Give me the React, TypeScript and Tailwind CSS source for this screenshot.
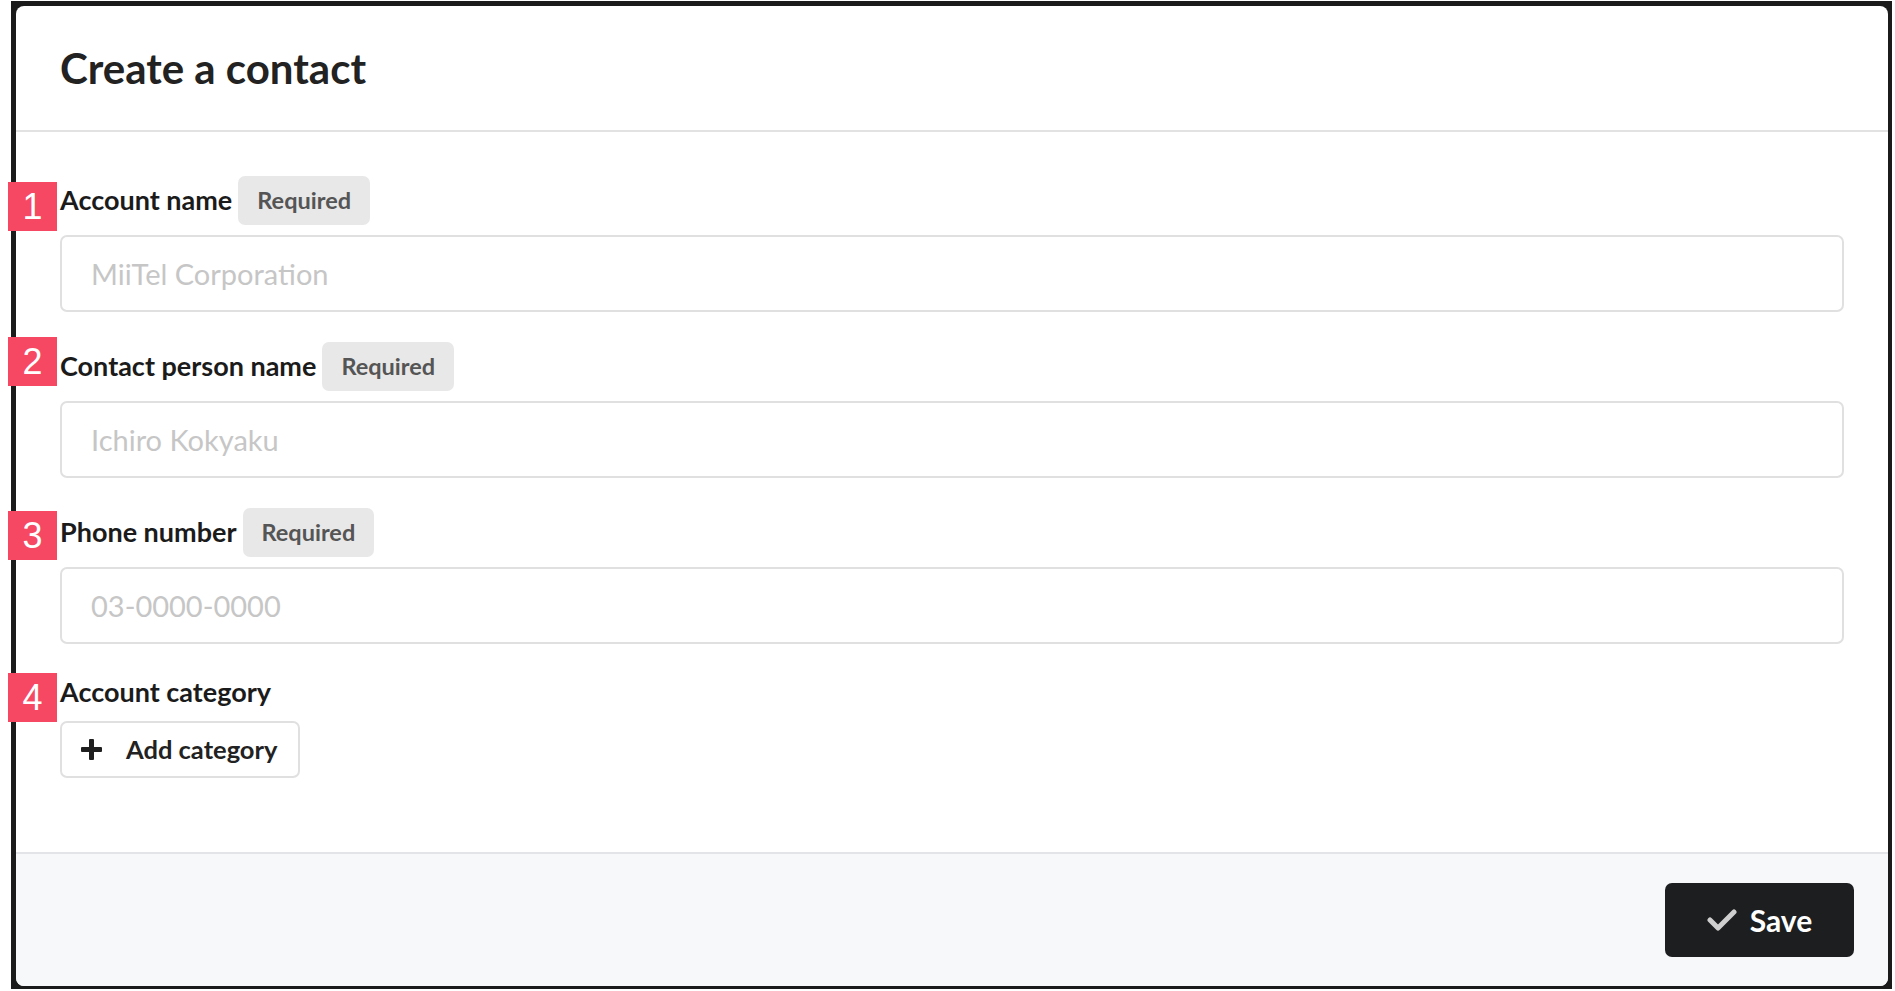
import React from "react";

const Marker = ({ n, top }: { n: string; top: string }) => (
  <div
    className={`absolute left-[8px] ${top} flex h-[49px] w-[49px] items-center justify-center bg-[#f64862] text-[36px] leading-none text-white`}
    style={{ fontFamily: '"Liberation Sans", Arial, sans-serif' }}
  >
    {n}
  </div>
);

const RequiredBadge = () => (
  <span className="ml-[6px] inline-flex h-[49px] items-center rounded-[7px] bg-[#e8e8e8] px-[19px] text-[23.5px] font-bold text-[#555555]">
    Required
  </span>
);

const Field = ({ label, placeholder }: { label: string; placeholder: string }) => (
  <div className="flex flex-col">
    <div className="flex h-[49px] items-center">
      <span className="text-[27px] font-bold text-[#1b1b1b]">{label}</span>
      <RequiredBadge />
    </div>
    <div className="mt-[10px] flex h-[77px] items-center rounded-[7px] border-2 border-[#e0e0e0] bg-white px-[29px]">
      <span className="text-[29px] text-[#c6c6c6]">{placeholder}</span>
    </div>
  </div>
);

export default function App() {
  return (
    <div
      className="relative h-[991px] w-[1895px] bg-white pb-[2px] pl-[11px] pr-[3px] pt-[1px]"
      style={{ fontFamily: 'Lato, "Noto Sans", sans-serif' }}
    >
      <div className="h-full bg-[#1b1b1c] pb-[3px] pl-[5px] pr-[4px] pt-[5px]">
        <div className="flex h-full flex-col overflow-hidden rounded-[8px] bg-white">
          <div className="flex h-[126px] shrink-0 items-center border-b-2 border-[#e2e2e2] px-[44px]">
            <h1 className="text-[42px] font-bold text-[#222222]">Create a contact</h1>
          </div>
          <div className="flex flex-1 flex-col gap-[30px] px-[44px] pt-[44px]">
            <Field label="Account name" placeholder="MiiTel Corporation" />
            <Field label="Contact person name" placeholder="Ichiro Kokyaku" />
            <Field label="Phone number" placeholder="03-0000-0000" />
            <div className="flex flex-col">
              <div className="flex h-[37px] items-center">
                <span className="text-[27px] font-bold text-[#1b1b1b]">Account category</span>
              </div>
              <button className="mt-[10px] flex h-[57px] w-[240px] items-center gap-[24px] rounded-[7px] border-2 border-[#e0e0e0] bg-white pl-[19px] text-[25.5px] font-bold text-[#222222]">
                <svg width="21" height="21" viewBox="0 0 21 21">
                  <rect x="8" y="0" width="5" height="21" rx="1" fill="#1f1f1f" />
                  <rect x="0" y="8" width="21" height="5" rx="1" fill="#1f1f1f" />
                </svg>
                Add category
              </button>
            </div>
          </div>
          <div className="flex h-[134px] shrink-0 items-center justify-end border-t-2 border-[#e2e4e7] bg-[#f7f8fa] pr-[34px]">
            <button className="flex h-[74px] w-[189px] items-center justify-center gap-[13px] rounded-[7px] bg-[#1d1e20] text-[30px] font-bold text-white">
              <svg width="30" height="22" viewBox="0 0 30 22">
                <path d="M3 11 L11 19 L27 3" fill="none" stroke="#cfcfcf" strokeWidth="5" strokeLinecap="round" strokeLinejoin="round" />
              </svg>
              Save
            </button>
          </div>
        </div>
      </div>
      <Marker n="1" top="top-[182px]" />
      <Marker n="2" top="top-[337px]" />
      <Marker n="3" top="top-[511px]" />
      <Marker n="4" top="top-[673px]" />
    </div>
  );
}
